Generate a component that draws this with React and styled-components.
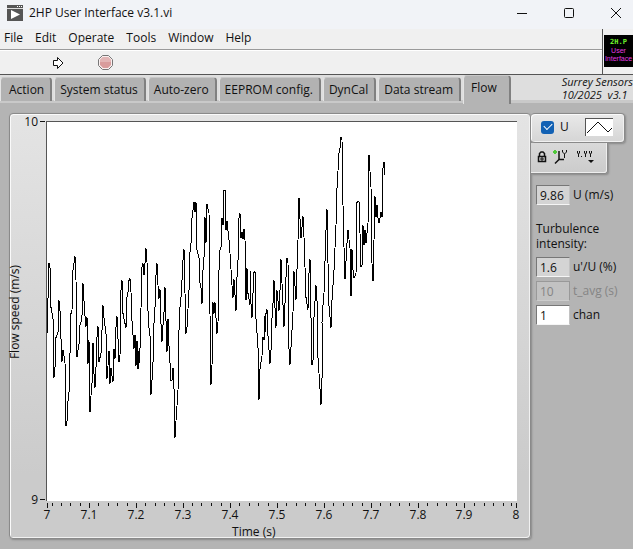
import React from "react";
import styled, { createGlobalStyle, css } from "styled-components";

const Global = createGlobalStyle`
  * { box-sizing: border-box; }
  body { margin: 0; background: #b4b4b4; }
  body, button, input { font: 12px/16px "Open Sans", "Noto Sans", sans-serif; color: #111; }
  button { border: 0; padding: 0; background: none; }
`;

const Window = styled.div`
  min-height: 100vh;
  display: flex;
  flex-direction: column;
  overflow: hidden;
  background: #b4b4b4;
`;

const TitleBar = styled.header`
  height: 29px;
  flex: none;
  display: flex;
  align-items: center;
  gap: 6px;
  padding: 0 0 3px 7px;
  background: #f1f3f7;
`;
const Title = styled.h1`
  margin: 0;
  flex: 1;
  font-size: 12px;
  font-weight: 400;
  white-space: nowrap;
`;
const WindowButtons = styled.div`
  display: flex;
  flex: none;
  margin-right: -6px;
`;
const WindowButton = styled.button`
  width: 47px;
  height: 26px;
  display: grid;
  place-items: center;
`;

const Bars = styled.div`
  height: 46px;
  flex: none;
  display: flex;
  background: #f0f0f0;
  border-bottom: 1px solid #555;
`;
const BarStack = styled.div`
  flex: 1;
  min-width: 0;
`;
const MenuBar = styled.nav`
  height: 21px;
  display: flex;
  align-items: center;
  gap: 12px;
  padding: 0 4px 2px;
  border-bottom: 1px solid #9a9a9a;
`;
const Toolbar = styled.div`
  height: 24px;
  display: flex;
  align-items: center;
  gap: 32px;
  padding-left: 51px;
  border-top: 1px solid #fff;
`;
const ToolButton = styled.button`
  width: 15px;
  height: 16px;
  display: grid;
  place-items: center;
`;
const ViBox = styled.div`
  width: 31px;
  flex: none;
  padding: 6px 0 0 1px;
  border-left: 1px solid #555;
  overflow: hidden;
`;
const ViIcon = styled.div`
  height: 32px;
  padding: 3px 0;
  background: #000;
  color: #e23ae0;
  font: 7px/9px "Liberation Sans", sans-serif;
  text-align: center;
  white-space: nowrap;
  strong { display: block; font-family: "DejaVu Sans Mono", monospace; color: #6cf02c; }
  span { display: block; line-height: 8px; }
`;

const TabStrip = styled.div`
  height: 30px;
  flex: none;
  display: flex;
  align-items: flex-start;
  background: linear-gradient(#dedede 0 25px, #c9c9c9 25px 28px, #b4b4b4 28px);
`;
const TabList = styled.div`
  display: flex;
  align-items: flex-start;
`;
const Tab = styled.button`
  height: 24px;
  margin: 2px 2px 0 0;
  padding: 0 6px 0 5px;
  white-space: nowrap;
  background: #b2b2b2;
  border: solid;
  border-width: 1px 2px 0 1px;
  border-color: #c8c8c8 #808080 #bbb #e4e4e4;
  border-radius: 4px 4px 0 0;
  &:first-child { padding-left: 8px; }
  ${(p) => p.$selected && css`
    height: 29px;
    margin-top: 0;
    padding: 0 12px 5px 7px;
    background: #b4b4b4;
  `}
`;
const Version = styled.div`
  margin-left: auto;
  flex: none;
  font-size: 11px;
  font-style: italic;
  line-height: 13px;
  white-space: pre;
`;

const Content = styled.main`
  flex: 1;
  display: flex;
  align-items: stretch;
  padding: 8px 8px 10px 9px;
`;
const raised = css`
  border: 1px solid #8a8a8a;
  box-shadow: inset 1px 1px #fafafa, inset -1px -1px #f1f1f1, 1px 1px 2px #8a8a8a;
`;
const GraphPanel = styled.section`
  flex: 1;
  min-width: 0;
  display: flex;
  ${raised}
  border-radius: 4px;
  background: linear-gradient(#e4e4e4, #cbcbcb 85%);
`;
const YAxis = styled.svg`
  width: 36px;
  height: auto;
  flex: none;
  overflow: visible;
  font-size: 12px;
  fill: #111;
`;
const PlotColumn = styled.div`
  flex: 1;
  min-width: 0;
  display: flex;
  flex-direction: column;
  padding: 7px 13px 0 0;
`;
const PlotBox = styled.div`
  flex: 1;
  display: grid;
  background: #fff;
  border: solid #555;
  border-width: 1px 0 0 1px;
`;
const Trace = styled.svg`
  display: block;
  width: 100%;
  height: 100%;
  min-height: 300px;
`;
const XAxis = styled.svg`
  display: block;
  height: 37px;
  flex: none;
  margin-left: 1px;
  overflow: visible;
  font-size: 12px;
  fill: #111;
`;

const Side = styled.aside`
  width: 94px;
  flex: none;
`;
const Legend = styled.label`
  height: 30px;
  display: flex;
  align-items: center;
  gap: 6px;
  padding: 0 11px 2px 10px;
  ${raised}
  border-left: 0;
  border-radius: 4px;
  background: linear-gradient(#e9e9e9, #d5d5d5);
`;
const Tick = styled.input`
  appearance: none;
  width: 13px;
  height: 13px;
  margin: 0;
  border-radius: 3px;
  display: grid;
  place-items: center;
  &:checked { background: #1261b4; }
  &:checked::after {
    content: "";
    width: 7px;
    height: 4px;
    margin-bottom: 3px;
    border: solid #fff;
    border-width: 0 0 1px 1px;
    transform: rotate(-45deg);
  }
`;
const LineSample = styled.svg`
  width: 28px;
  height: 18px;
  margin-left: auto;
  background: #fff;
  border: solid #555;
  border-width: 1px 0 0 1px;
`;
const Palette = styled.div`
  width: 77px;
  height: 31px;
  display: flex;
  align-items: center;
  gap: 5px;
  padding: 2px 6px 0;
  border: solid #8a8a8a;
  border-width: 0 1px 1px 0;
  border-radius: 0 0 3px 0;
  box-shadow: inset -1px -1px #eee, 1px 1px 2px #8a8a8a;
  background: linear-gradient(#d9d9d9, #cbcbcb);
`;
const Readings = styled.div`
  display: flex;
  flex-direction: column;
  gap: 4px;
  padding: 11px 0 0 5px;
`;
const Heading = styled.p`
  margin: 12px 0 2px;
  line-height: 15px;
`;
const Field = styled.label`
  display: flex;
  align-items: center;
  gap: 3px;
  white-space: nowrap;
  color: ${(p) => (p.$off ? "#858585" : "#111")};
`;
const Value = styled.input`
  width: 34px;
  height: 20px;
  flex: none;
  padding: 0 3px;
  color: inherit;
  background: #d4d4d4;
  border: 1px solid;
  border-color: #777 #c2c2c2 #f5f5f5 #777;
  border-radius: 0;
  &:not(:read-only) { background: #fff; }
  &:disabled { background: #c2c2c2; border-color: #999 #999 #ccc #999; }
`;

const trace = [
  47,333,49,263,50,267,51,307,53,318,54,377,55,367,56,337,58,332,59,300,60,310,61,338,62,361,63,349,65,362,
  66,425,67,420,67,408,69,392,70,353,71,313,72,310,73,270,75,256,76,280,77,356,79,343,79,327,81,322,82,315,
  83,283,84,300,85,315,86,326,87,317,88,363,89,339,90,411,91,395,92,383,93,342,94,373,95,387,96,367,97,337,
  98,326,99,361,101,353,102,330,103,305,104,317,106,333,107,378,108,365,109,350,110,383,111,367,112,375,
  113,381,114,348,115,358,116,327,117,316,119,361,120,355,121,290,122,280,123,313,125,323,126,327,127,297,
  128,292,129,280,130,278,131,292,132,320,134,348,135,334,136,365,137,340,138,368,138,350,139,363,140,348,
  141,308,142,267,143,263,144,275,145,263,146,248,147,262,148,310,149,327,150,335,151,394,152,380,153,362,
  154,323,155,307,156,275,157,263,158,285,159,298,160,289,161,323,162,341,163,325,164,312,165,287,166,320,
  167,351,168,318,169,345,171,380,172,380,173,367,174,388,175,437,176,420,178,390,179,330,180,307,181,297,
  182,280,183,260,184,249,185,293,186,333,187,327,189,290,190,252,191,243,192,218,193,210,194,202,195,212,
  196,202,197,250,199,258,199,278,201,287,202,303,203,270,204,257,205,217,206,243,207,204,209,213,210,313,
  211,384,212,365,213,302,214,313,215,302,217,333,218,322,219,270,220,250,221,247,222,218,223,225,224,190,
  225,190,226,230,227,221,229,240,230,253,232,285,233,297,234,279,236,310,237,277,238,260,239,218,240,213,
  241,238,242,232,243,239,244,229,245,240,246,300,247,268,248,293,250,304,250,271,251,303,252,317,253,293,
  254,272,255,271,256,318,258,347,259,399,260,368,262,355,263,337,264,339,264,315,265,332,266,313,267,309,
  268,335,270,363,271,350,272,318,273,303,274,280,275,307,276,327,277,290,279,310,280,290,281,259,282,283,
  284,326,285,303,286,277,287,258,288,263,289,348,290,364,292,330,293,312,294,271,296,299,298,240,299,198,
  301,238,303,216,304,237,305,267,306,297,308,309,309,273,310,259,311,317,312,364,313,360,314,317,316,285,
  317,300,318,357,320,388,321,404,322,377,322,322,323,305,324,293,326,230,327,209,328,263,329,305,331,327,
  332,300,334,270,336,225,337,188,339,153,340,148,341,137,342,140,343,205,344,247,345,279,347,243,348,230,
  350,248,351,296,352,249,353,270,354,278,356,273,357,202,359,201,360,233,361,267,362,265,363,225,364,245,
  365,230,366,243,368,223,369,155,371,187,372,263,373,281,374,240,375,196,376,217,377,205,378,218,379,223,
  381,212,382,217,382,173,384,162,385,175,
];
const points = trace.reduce(
  (s, v, i) => s + (i % 2 ? `${v - 122} ` : `${v - 47},`),
  ""
);

const SPAN = 470;
const majors = [
  [0, "7"], [42, "7.1"], [89, "7.2"], [136, "7.3"], [183, "7.4"], [230, "7.5"],
  [277, "7.6"], [324, "7.7"], [371, "7.8"], [417, "7.9"], [469, "8"],
];
const minors = [5, 14, 23, 33];
for (let start = 42; start < 460; start += 47) {
  [9, 19, 28, 38].forEach((d) => start + d < 460 && minors.push(start + d));
}
minors.push(464);
const pct = (v) => `${(v / SPAN) * 100}%`;

function FlowChart() {
  return (
    <GraphPanel aria-label="Flow speed chart">
      <YAxis>
        <path d="M30 7.500h5" stroke="#111" />
        <text x="28" y="12" textAnchor="end">10</text>
        <svg y="100%" overflow="visible">
          <path d="M30-38.500h5" stroke="#111" />
          <text x="28" y="-34" textAnchor="end">9</text>
        </svg>
        <svg y="50%" overflow="visible">
          <text transform="translate(9 -14) rotate(-90)" textAnchor="middle">Flow speed (m/s)</text>
        </svg>
      </YAxis>
      <PlotColumn>
        <PlotBox>
          <Trace viewBox="0 0 470 378" preserveAspectRatio="none" shapeRendering="crispEdges">
            <polyline points={points} fill="none" stroke="#000" vectorEffect="non-scaling-stroke" />
          </Trace>
        </PlotBox>
        <XAxis>
          <g stroke="#111" shapeRendering="crispEdges">
            {minors.map((v) => <line key={v} x1={pct(v)} x2={pct(v)} y1="2" y2="5" />)}
            {majors.map(([v]) => <line key={v} x1={pct(v)} x2={pct(v)} y1="2" y2="7" />)}
          </g>
          {majors.map(([v, t]) => (
            <text key={t} x={pct(v)} y="18" textAnchor="middle">{t}</text>
          ))}
          <text x="44%" y="35" textAnchor="middle">Time (s)</text>
        </XAxis>
      </PlotColumn>
    </GraphPanel>
  );
}

const tabs = ["Action", "System status", "Auto-zero", "EEPROM config.", "DynCal", "Data stream", "Flow"];

export default function App() {
  return (
    <Window>
      <Global />
      <TitleBar>
        <svg width="16" height="16" viewBox="0 0 16 16">
          <path fill="#555" d="M0 0h16v16H0z" />
          <path stroke="#fff" strokeDasharray="1 1" d="M10 1.500h6" />
          <path stroke="#ddd" d="M0 3.500h16" />
          <path fill="#fff" d="M4 5v9l9-4.500z" />
        </svg>
        <Title>2HP User Interface v3.1.vi</Title>
        <WindowButtons>
          <WindowButton aria-label="Minimize">
            <svg width="10" height="10"><path d="M0 5.500h10" stroke="#111" /></svg>
          </WindowButton>
          <WindowButton aria-label="Maximize">
            <svg width="10" height="10"><rect x=".5" y=".5" width="9" height="9" rx="1" fill="none" stroke="#111" /></svg>
          </WindowButton>
          <WindowButton aria-label="Close">
            <svg width="10" height="10"><path d="M0 0l10 10M10 0L0 10" stroke="#111" /></svg>
          </WindowButton>
        </WindowButtons>
      </TitleBar>
      <Bars>
        <BarStack>
          <MenuBar>
            {["File", "Edit", "Operate", "Tools", "Window", "Help"].map((m) => <button key={m}>{m}</button>)}
          </MenuBar>
          <Toolbar>
            <ToolButton aria-label="Run">
              <svg width="13" height="14"><path d="M1.500 4.500h4v-3l5.500 5.500-5.500 5.500v-3h-4z" fill="#fff" stroke="#111" /></svg>
            </ToolButton>
            <ToolButton aria-label="Abort">
              <svg width="15" height="15" viewBox="0 0 15 15">
                <path d="M4.500.5h6l4 4v6l-4 4h-6l-4-4v-6z" fill="#f8eeee" stroke="#777" />
                <path d="M5 2h5l3 3v5l-3 3H5l-3-3V5z" fill="#d99c9c" />
                <path d="M5 2h5l3 3v2H2V5z" fill="#e2b5b5" />
              </svg>
            </ToolButton>
          </Toolbar>
        </BarStack>
        <ViBox>
          <ViIcon><strong>2H.P</strong><span>User</span><span>Interface</span></ViIcon>
        </ViBox>
      </Bars>
      <TabStrip>
        <TabList role="tablist">
          {tabs.map((t) => (
            <Tab key={t} role="tab" aria-selected={t === "Flow"} $selected={t === "Flow"}>{t}</Tab>
          ))}
        </TabList>
        <Version>{"Surrey Sensors\n10/2025  v3.1"}</Version>
      </TabStrip>
      <Content>
        <FlowChart />
        <Side>
          <Legend>
            <Tick type="checkbox" defaultChecked />
            U
            <LineSample viewBox="0 0 27 17"><path d="M1 14L12 3l10 10 4-4" fill="none" stroke="#111" /></LineSample>
          </Legend>
          <Palette>
            <button aria-label="Scale lock">
              <svg width="10" height="14" viewBox="0 0 10 14">
                <path d="M2.500 6V3.500L4 2h2l1.500 1.500V6" fill="none" stroke="#111" strokeWidth="1.500" />
                <path d="M1.500 6.500h7v5h-7z" fill="#ccc" stroke="#111" strokeWidth="1.500" />
                <path d="M3 9h4M5 7v4" stroke="#111" />
              </svg>
            </button>
            <button aria-label="Y scale">
              <svg width="19" height="16" viewBox="0 0 19 16">
                <path d="M3 1v4M1 3h4" stroke="#4fc83a" strokeWidth="2" />
                <path d="M7 2v9M7 10.500h5M7 10.500l-4 4" fill="none" stroke="#111" strokeWidth="1.500" />
                <path d="M10.500 1v2l2 2 2-2V1M12.500 5v4" fill="none" stroke="#111" />
              </svg>
            </button>
            <button aria-label="Y format">
              <svg width="20" height="16" viewBox="0 0 20 16" fill="none" stroke="#111">
                <path d="M1.500 2v2l1 1 1-1V2M2.500 5v3M5 7.500h1M8.500 2v2l1 1 1-1V2M9.500 5v3M13.500 2v2l1 1 1-1V2M14.500 5v3" />
                <path d="M12 11h6l-3 3z" fill="#111" stroke="none" />
              </svg>
            </button>
          </Palette>
          <Readings>
            <Field><Value readOnly value="9.86" />U (m/s)</Field>
            <Heading>Turbulence intensity:</Heading>
            <Field><Value readOnly value="1.6" />u'/U (%)</Field>
            <Field $off><Value disabled value="10" />t_avg (s)</Field>
            <Field><Value defaultValue="1" />chan</Field>
          </Readings>
        </Side>
      </Content>
    </Window>
  );
}
